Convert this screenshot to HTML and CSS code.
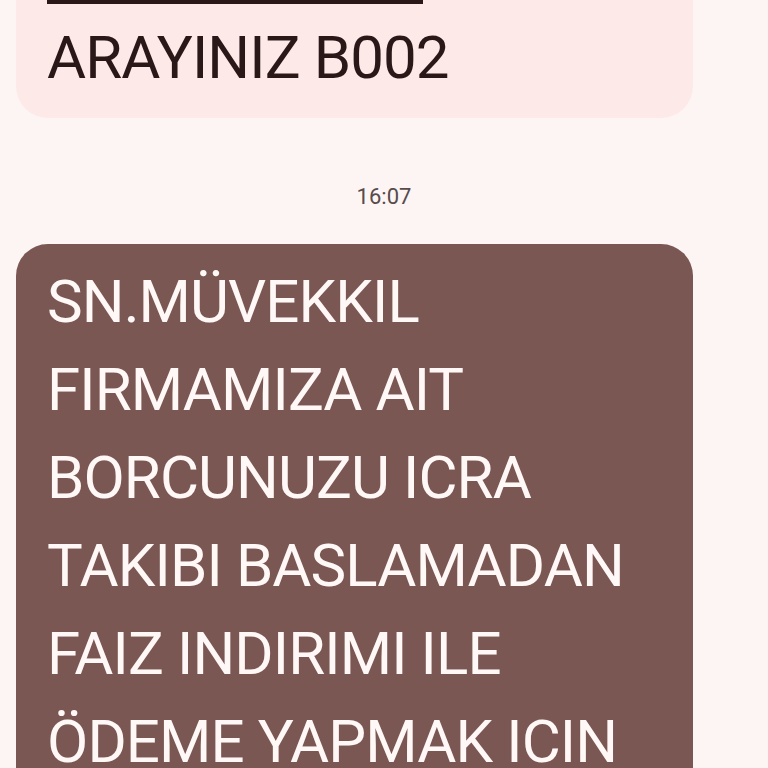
FILE: index.html
```html
<!DOCTYPE html>
<html lang="tr">
<head>
<meta charset="utf-8">
<link rel="stylesheet" href="styles.css">
</head>
<body>
<div class="chat">
  <div class="bubble bubble-in">
    <div class="link-bar"></div>
    <div class="msg">ARAYINIZ B002</div>
  </div>
  <div class="time">16:07</div>
  <div class="bubble bubble-dark">
    <div class="msg">SN.MÜVEKKIL<br>FIRMAMIZA AIT<br>BORCUNUZU ICRA<br>TAKIBI BASLAMADAN<br>FAIZ INDIRIMI ILE<br>ÖDEME YAPMAK ICIN</div>
  </div>
</div>
</body>
</html>
```

FILE: styles.css
```css
html, body {
  margin: 0;
  padding: 0;
  background: #fdf5f3;
  overflow: hidden;
  height: 768px;
}
.chat {
  display: flex;
  flex-direction: column;
  font-family: Roboto, "Noto Sans", sans-serif;
}
.bubble {
  border-radius: 32px;
  padding: 0 28px 16px 31px;
  margin: 0 75px 0 16px;
}
.bubble-in {
  background: #fde9e8;
  color: #2a1718;
  margin-top: -40px;
  padding-top: 39px;
}
.link-bar {
  width: 376px;
  height: 5px;
  background: #2a1718;
  margin-bottom: 10px;
}
.bubble-dark {
  background: #7a5752;
  color: #fff8f6;
  padding-top: 14px;
}
.msg {
  font-size: 60px;
  line-height: 88px;
  letter-spacing: -0.9px;
}
.time {
  text-align: center;
  font-size: 22px;
  line-height: 30px;
  color: #574b4b;
  margin: 64px 0 32px;
}
```
